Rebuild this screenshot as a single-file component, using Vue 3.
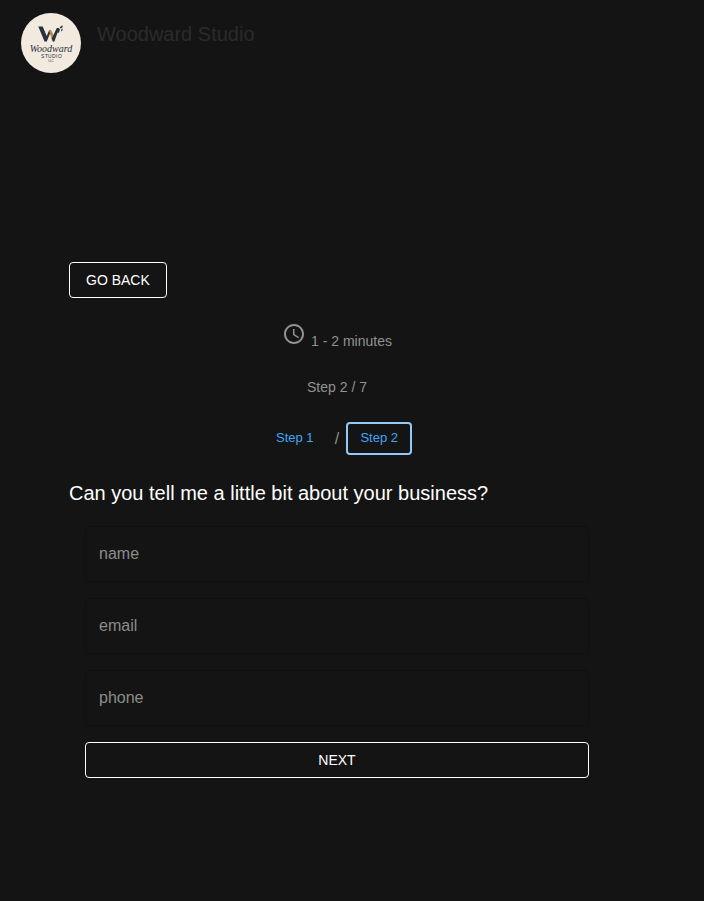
<script setup>
import { reactive } from 'vue'

const fields = [
  { id: 'name', type: 'text', autocomplete: 'name' },
  { id: 'email', type: 'email', autocomplete: 'email' },
  { id: 'phone', type: 'tel', autocomplete: 'tel' },
]
const answers = reactive({ name: '', email: '', phone: '' })
</script>

<template>
  <div class="page">
    <header class="header">
      <svg class="logo" viewBox="0 0 60 60" role="img" aria-label="Woodward Studio LLC">
        <circle cx="30" cy="30" r="30" fill="#f2e9df" />
        <path d="M17.3 13.5h4.4l4 9.5 2.3-5.5h2.2l-4.4 11h-2.3z" fill="#27323a" />
        <path d="M28 17.5h2.2l3.6 7-1.4 4h-1z" fill="#c18a35" />
        <path d="M32 28.5l-1.2-3 5-10.5h2.4l-4.8 13.5z" fill="#27323a" />
        <path d="M36 19.5l1.2-4 1.8.6-1 3.6zM38.6 14.6l2.6-2.4.6 1.8-2.2 1.6zM40 18l.8-2.4 1 .4-.8 2.2z" fill="#27323a" />
        <text class="logo-script" x="30" y="39" text-anchor="middle">Woodward</text>
        <text class="logo-caps" x="20 24 27 31 35 37" y="45">STUDIO</text>
        <text class="logo-small" x="30" y="49" text-anchor="middle">LLC</text>
      </svg>
      <h1 class="brand">Woodward Studio</h1>
    </header>

    <main class="content">
      <button class="outlined back" type="button">GO BACK</button>

      <p class="duration">
        <svg class="clock" viewBox="0 0 24 24" aria-hidden="true">
          <path d="M11.99 2C6.47 2 2 6.48 2 12s4.47 10 9.99 10C17.52 22 22 17.52 22 12S17.52 2 11.99 2zM12 20c-4.42 0-8-3.58-8-8s3.58-8 8-8 8 3.58 8 8-3.58 8-8 8zm.5-13H11v6l5.25 3.15.75-1.23-4.5-2.67z" />
        </svg>
        <span>1 - 2 minutes</span>
      </p>
      <p class="progress">Step 2 / 7</p>

      <nav class="steps" aria-label="Steps">
        <button class="step" type="button">Step 1</button>
        <span class="separator">/</span>
        <button class="step current" type="button" aria-current="step">Step 2</button>
      </nav>

      <h2 class="question">Can you tell me a little bit about your business?</h2>

      <form class="form" @submit.prevent>
        <input
          v-for="field in fields"
          :key="field.id"
          v-model="answers[field.id]"
          class="field"
          :type="field.type"
          :name="field.id"
          :placeholder="field.id"
          :aria-label="field.id"
          :autocomplete="field.autocomplete"
        />
        <button class="outlined" type="submit">NEXT</button>
      </form>
    </main>
  </div>
</template>

<style>
body {
  margin: 0;
  background: #141414;
}
</style>

<style scoped>
.page {
  box-sizing: border-box;
  min-height: 100vh;
  background: #141414;
  color: #fff;
  font-family: "Liberation Sans", Arial, Helvetica, sans-serif;
}
.header {
  display: flex;
  align-items: flex-start;
  gap: 16px;
  padding: 13px 21px 0;
}
.logo {
  width: 60px;
  height: 60px;
  flex: none;
}
.logo text {
  fill: #27323a;
}
.logo-script {
  font: italic 400 10px "Liberation Serif", serif;
}
.logo-caps {
  font: 400 5px "Liberation Sans", sans-serif;
}
.logo-small {
  font: 400 3px "Liberation Sans", sans-serif;
}
.brand {
  margin: 5px 0 0;
  color: #2b2b2b;
  font-size: 20px;
  font-weight: 400;
  line-height: 32px;
}
.content {
  display: flex;
  flex-direction: column;
  padding: 189px 99px 120px 69px;
}
.outlined {
  height: 36px;
  padding: 0 16px;
  border: 1px solid #fff;
  border-radius: 4px;
  background: transparent;
  color: #fff;
  font: inherit;
  font-size: 14px;
  cursor: pointer;
}
.back {
  align-self: flex-start;
}
.duration,
.progress {
  margin: 0;
  color: #929292;
  font-size: 14px;
  line-height: 20px;
  text-align: center;
}
.duration {
  display: flex;
  justify-content: center;
  align-items: flex-end;
  gap: 5px;
  height: 28px;
  margin-top: 24px;
}
.clock {
  width: 24px;
  height: 24px;
  align-self: flex-start;
  fill: currentColor;
}
.duration span {
  line-height: 18px;
}
.progress {
  margin-top: 27px;
}
.steps {
  display: flex;
  justify-content: center;
  align-items: center;
  margin-top: 25px;
}
.step {
  box-sizing: border-box;
  width: 66px;
  height: 33px;
  padding: 0 0 2px;
  border: 2px solid transparent;
  border-radius: 4px;
  background: transparent;
  color: #42a5f5;
  font: inherit;
  font-size: 13px;
  cursor: pointer;
}
.current {
  border-color: #90caf9;
}
.separator {
  margin: 0 7px;
  color: #929292;
  font-size: 16px;
}
.question {
  margin: 22px 0 0;
  font-size: 20px;
  font-weight: 400;
  line-height: 32px;
}
.form {
  display: flex;
  flex-direction: column;
  gap: 16px;
  padding: 17px 16px 0;
}
.field {
  box-sizing: border-box;
  width: 100%;
  height: 56px;
  padding: 0 13px;
  border: 1px solid #101010;
  border-radius: 4px;
  background: transparent;
  color: #fff;
  font: inherit;
  font-size: 16px;
}
.field::placeholder {
  color: #8c8c8c;
  opacity: 1;
}
</style>
